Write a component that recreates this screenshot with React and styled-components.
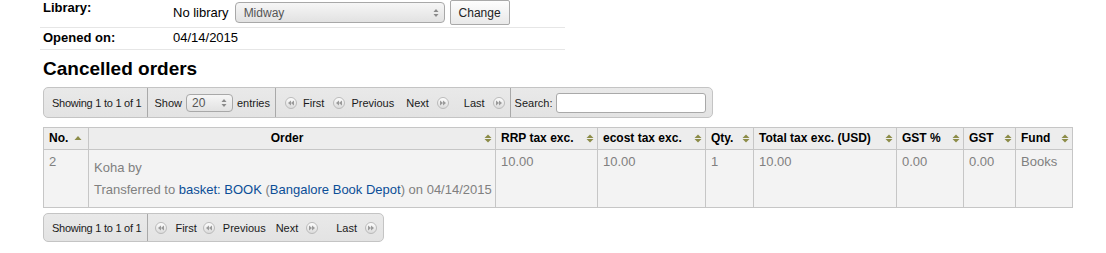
import React from 'react';
import styled, { createGlobalStyle } from 'styled-components';

const GlobalStyle = createGlobalStyle`
  html, body {
    margin: 0;
    padding: 0;
    background: #fff;
  }
  body {
    font-family: "Liberation Sans", Arial, sans-serif;
    color: #000;
  }
`;

const Page = styled.div`
  padding-left: 43px;
  width: 1063px;
`;

const InfoList = styled.div`
  width: 525px;
  margin-left: -3px;
`;

const InfoRow = styled.div`
  display: flex;
  align-items: flex-start;
  padding: ${p => p.$pad};
  padding-left: 3px;
  border-bottom: 1px solid #e6e6e6;
`;

const Label = styled.span`
  flex: none;
  width: 130px;
  font-size: 13px;
  font-weight: bold;
  line-height: 16px;
`;

const Value = styled.div`
  display: flex;
  align-items: center;
  gap: 6px;
  height: ${p => p.$h || 16}px;
  font-size: 13px;
  line-height: 16px;
`;

const FakeSelect = styled.div`
  box-sizing: border-box;
  display: flex;
  align-items: center;
  justify-content: space-between;
  width: ${p => p.$w}px;
  height: ${p => p.$h}px;
  padding: 0 5px 0 ${p => p.$pl}px;
  border: 1px solid #a8a8a8;
  border-radius: 4px;
  background: linear-gradient(#f6f6f6, #e2e2e2);
  color: #555;
  font-size: ${p => p.$fs}px;
`;

const ChangeButton = styled.button`
  box-sizing: border-box;
  width: 60px;
  height: 25px;
  margin-left: -1px;
  padding: 0;
  border: 1px solid #a9a9a9;
  border-radius: 2px;
  background: linear-gradient(#fdfdfd, #e9e9e9);
  font-family: inherit;
  font-size: 12px;
  color: #222;
`;

const Heading = styled.h1`
  margin: 7px 0;
  font-size: 19px;
  line-height: 23px;
  font-weight: bold;
`;

const Toolbar = styled.div`
  box-sizing: border-box;
  display: inline-flex;
  align-items: stretch;
  height: ${p => p.$h}px;
  border: 1px solid #c4c4c4;
  border-radius: 5px;
  background: linear-gradient(#e9e9e9, #e3e3e3);
  font-size: 11px;
  color: #1a1a1a;
`;

const Segment = styled.div`
  display: flex;
  align-items: center;
  gap: ${p => p.$gap || 0}px;
  padding: 0 ${p => p.$pr || 6}px 0 ${p => p.$pl || 8}px;
  border-right: ${p => (p.$last ? 'none' : '1px solid #a9a9a9')};
  letter-spacing: ${p => (p.$tight ? '-0.25px' : 'normal')};
`;

const SearchInput = styled.input`
  box-sizing: border-box;
  width: 150px;
  height: 20px;
  margin: 0;
  border: 1px solid #a9a9a9;
  border-radius: 3px;
  background: #fff;
`;

const Pager = styled.div`
  display: flex;
  align-items: center;
`;

const PageButton = styled.span`
  display: flex;
  align-items: center;
  flex-direction: ${p => (p.$right ? 'row-reverse' : 'row')};
  gap: ${p => p.$gap}px;
  margin-left: ${p => p.$ml || 0}px;
`;

const Table = styled.table`
  width: 1029px;
  table-layout: fixed;
  border-collapse: collapse;
  margin-top: 9px;
  border: 1px solid #bdbdbd;
`;

const Th = styled.th`
  padding: 3px 3px 3px 5px;
  border: 1px solid #c6c6c6;
  background: #ededed;
  font-size: 12px;
  line-height: 15px;
  font-weight: bold;
  text-align: left;
`;

const HeadInner = styled.div`
  display: flex;
  align-items: center;
  gap: ${p => (p.$tight ? 6 : 4)}px;
`;

const HeadText = styled.span`
  flex: ${p => (p.$tight ? 'none' : 1)};
  text-align: ${p => (p.$center ? 'center' : 'left')};
  white-space: nowrap;
`;

const Td = styled.td`
  padding: 4px 5px;
  border: 1px solid #c6c6c6;
  background: #f3f3f3;
  vertical-align: top;
  font-size: 13px;
  line-height: 16px;
  color: #808080;
`;

const Line = styled.p`
  margin: 6px 0 5px;
  white-space: nowrap;
`;

const Link = styled.a`
  color: #0b4e97;
  text-decoration: none;
`;

const BottomBar = styled.div`
  margin-top: 5px;
`;

const SelectArrows = () => (
  <svg width="6" height="10" viewBox="0 0 6 10">
    <polygon points="0.5,4 3,1 5.5,4" fill="#8a8a8a" />
    <polygon points="0.5,6 5.5,6 3,9" fill="#8a8a8a" />
  </svg>
);

const SortIcon = ({ up }) =>
  up ? (
    <svg width="8" height="9" viewBox="0 0 8 9">
      <polygon points="0.5,6 4,2 7.5,6" fill="#8c8c48" />
    </svg>
  ) : (
    <svg width="8" height="9" viewBox="0 0 8 9">
      <polygon points="0.5,4 4,0.5 7.5,4" fill="#8c8c48" />
      <polygon points="0.5,5 7.5,5 4,8.5" fill="#8c8c48" />
    </svg>
  );

const PagerIcon = ({ dir }) => {
  const pts =
    dir === 'left'
      ? ['6,3.5 3,6 6,8.5', '9,3.5 6,6 9,8.5']
      : ['3,3.5 6,6 3,8.5', '6,3.5 9,6 6,8.5'];
  return (
    <svg width="12" height="12" viewBox="0 0 12 12">
      <defs>
        <linearGradient id={`pg-${dir}`} x1="0" y1="0" x2="0" y2="1">
          <stop offset="0" stopColor="#ffffff" />
          <stop offset="1" stopColor="#d9d9d9" />
        </linearGradient>
      </defs>
      <circle cx="6" cy="6" r="5.5" fill={`url(#pg-${dir})`} stroke="#bababa" />
      {pts.map(p => (
        <polygon key={p} points={p} fill="#9a9a9a" />
      ))}
    </svg>
  );
};

// gaps: [first→prev, prev→next, next→last]
const Pagination = ({ iconGap, gaps }) => (
  <Pager>
    <PageButton $gap={iconGap}>
      <PagerIcon dir="left" />
      First
    </PageButton>
    <PageButton $gap={iconGap} $ml={gaps[0]}>
      <PagerIcon dir="left" />
      Previous
    </PageButton>
    <PageButton $right $gap={8} $ml={gaps[1]}>
      <PagerIcon dir="right" />
      Next
    </PageButton>
    <PageButton $right $gap={8} $ml={gaps[2]}>
      <PagerIcon dir="right" />
      Last
    </PageButton>
  </Pager>
);

const columns = [
  { label: 'No.', width: 45, up: true },
  { label: 'Order', width: 407, center: true },
  { label: 'RRP tax exc.', width: 102 },
  { label: 'ecost tax exc.', width: 108 },
  { label: 'Qty.', width: 48 },
  { label: 'Total tax exc. (USD)', width: 143 },
  { label: 'GST %', width: 67 },
  { label: 'GST', width: 52 },
  { label: 'Fund', width: 57 },
];

export default function App() {
  return (
    <>
      <GlobalStyle />
      <Page>
        <InfoList>
          <InfoRow $pad="0 0 2px">
            <Label>Library:</Label>
            <Value $h={25}>
              No library
              <FakeSelect $w={210} $h={21} $pl={8} $fs={12}>
                Midway
                <SelectArrows />
              </FakeSelect>
              <ChangeButton>Change</ChangeButton>
            </Value>
          </InfoRow>
          <InfoRow $pad="2px 0 3px">
            <Label>Opened on:</Label>
            <Value>04/14/2015</Value>
          </InfoRow>
        </InfoList>

        <Heading>Cancelled orders</Heading>

        <Toolbar $h={31}>
          <Segment $pl={8} $pr={6} $tight>
            Showing 1 to 1 of 1
          </Segment>
          <Segment $pl={6} $pr={5} $gap={4}>
            Show
            <FakeSelect $w={47} $h={18} $pl={5} $fs={12}>
              20
              <SelectArrows />
            </FakeSelect>
            entries
          </Segment>
          <Segment $pl={9} $pr={5}>
            <Pagination iconGap={6} gaps={[9, 12, 15]} />
          </Segment>
          <Segment $pl={4} $pr={6} $gap={3} $last>
            Search:
            <SearchInput />
          </Segment>
        </Toolbar>

        <Table>
          <colgroup>
            {columns.map(c => (
              <col key={c.label} style={{ width: c.width }} />
            ))}
          </colgroup>
          <thead>
            <tr>
              {columns.map(c => (
                <Th key={c.label}>
                  <HeadInner $tight={c.up}>
                    <HeadText $tight={c.up} $center={c.center}>
                      {c.label}
                    </HeadText>
                    <SortIcon up={c.up} />
                  </HeadInner>
                </Th>
              ))}
            </tr>
          </thead>
          <tbody>
            <tr>
              <Td>2</Td>
              <Td>
                <Line>Koha by</Line>
                <Line>
                  Transferred to <Link href="#">basket: BOOK</Link> (
                  <Link href="#">Bangalore Book Depot</Link>) on 04/14/2015
                </Line>
              </Td>
              <Td>10.00</Td>
              <Td>10.00</Td>
              <Td>1</Td>
              <Td>10.00</Td>
              <Td>0.00</Td>
              <Td>0.00</Td>
              <Td>Books</Td>
            </tr>
          </tbody>
        </Table>

        <BottomBar>
          <Toolbar $h={29}>
            <Segment $pl={8} $pr={6} $tight>
              Showing 1 to 1 of 1
            </Segment>
            <Segment $pl={7} $pr={6} $last>
              <Pagination iconGap={8} gaps={[6, 10, 18]} />
            </Segment>
          </Toolbar>
        </BottomBar>
      </Page>
    </>
  );
}
